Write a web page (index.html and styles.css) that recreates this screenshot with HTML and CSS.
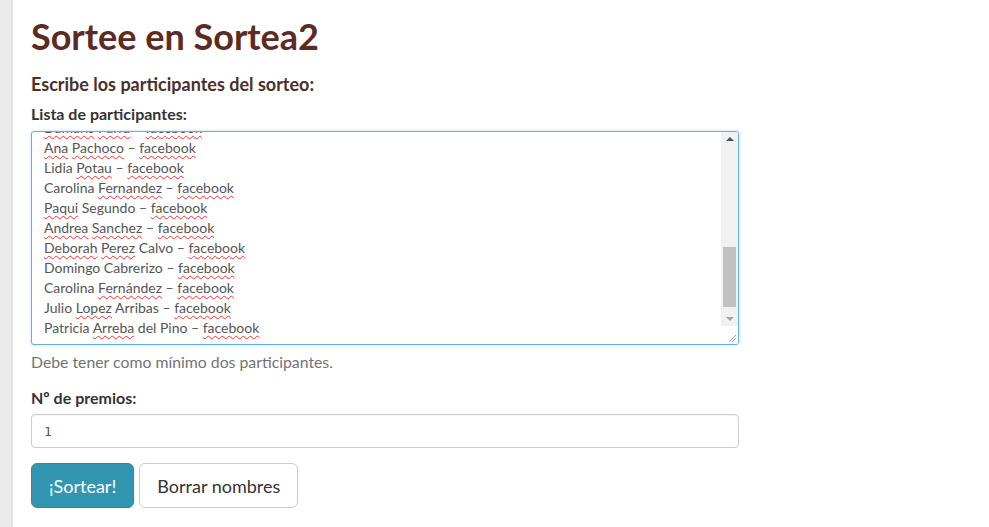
FILE: index.html
```html
<!DOCTYPE html>
<html lang="es">
<head>
<meta charset="utf-8">
<title>Sortee en Sortea2</title>
<link rel="stylesheet" href="styles.css">
</head>
<body>
<main class="page">
  <h1 class="title">Sortee en Sortea2</h1>
  <h2 class="subtitle">Escribe los participantes del sorteo:</h2>

  <label class="label">Lista de participantes:</label>
  <div class="textarea">
    <div class="ta-view">
      <div class="ta-lines">
        <div><span class="sp">Damaris</span> <span class="sp">Parra</span> – <span class="sp">facebook</span></div>
        <div><span class="sp">Ana</span> <span class="sp">Pachoco</span> – <span class="sp">facebook</span></div>
        <div>Lidia <span class="sp">Potau</span> – <span class="sp">facebook</span></div>
        <div>Carolina <span class="sp">Fernandez</span> – <span class="sp">facebook</span></div>
        <div><span class="sp">Paqui</span> Segundo – <span class="sp">facebook</span></div>
        <div><span class="sp">Andrea</span> <span class="sp">Sanchez</span> – <span class="sp">facebook</span></div>
        <div><span class="sp">Deborah</span> <span class="sp">Perez</span> Calvo – <span class="sp">facebook</span></div>
        <div>Domingo Cabrerizo – <span class="sp">facebook</span></div>
        <div>Carolina <span class="sp">Fernández</span> – <span class="sp">facebook</span></div>
        <div>Julio <span class="sp">Lopez</span> Arribas – <span class="sp">facebook</span></div>
        <div>Patricia <span class="sp">Arreba</span> del Pino – <span class="sp">facebook</span></div>
      </div>
    </div>
    <div class="scrollbar">
      <div class="sb-arrow sb-up"></div>
      <div class="sb-track"><div class="sb-thumb"></div></div>
      <div class="sb-arrow sb-down"></div>
      <div class="sb-corner">
        <svg width="17" height="18" viewBox="0 0 17 18"><path d="M8 16 L15 9 M11 16 L15 12" stroke="#9a9a9a" stroke-width="1" fill="none"/></svg>
      </div>
    </div>
  </div>
  <p class="help">Debe tener como mínimo dos participantes.</p>

  <label class="label label-prizes">Nº de premios:</label>
  <div class="input">1</div>

  <div class="actions">
    <button class="btn btn-primary">¡Sortear!</button>
    <button class="btn btn-default">Borrar nombres</button>
  </div>
</main>
</body>
</html>
```

FILE: styles.css
```css
* { box-sizing: border-box; }
html, body { margin: 0; padding: 0; height: 100%; }
body {
  background: #ebebeb;
  font-family: Lato, "Liberation Sans", sans-serif;
  overflow: hidden;
}
.page {
  margin-left: 11px;
  border-left: 2px solid #e2e2e2;
  background: #fff;
  min-height: 100%;
  padding: 13px 0 0 18px;
}
.title {
  margin: 0;
  font-size: 36px;
  font-weight: 700;
  line-height: 46px;
  color: #5c2b24;
}
.subtitle {
  margin: 13px 0 0;
  font-size: 18px;
  font-weight: 700;
  line-height: 24px;
  color: #4a2f2b;
}
.label {
  display: block;
  margin: 7px 0 6px;
  font-size: 16px;
  font-weight: 700;
  line-height: 22px;
  color: #333;
}
.textarea {
  width: 708px;
  height: 214px;
  border: 1px solid #66afe9;
  border-radius: 3px;
  box-shadow: 0 0 3px rgba(102, 175, 233, 0.5);
  display: flex;
  overflow: hidden;
  background: #fff;
}
.ta-view {
  flex: 1;
  overflow: hidden;
  padding-left: 12px;
}
.ta-lines {
  margin-top: -14px;
  font-size: 14px;
  line-height: 20px;
  color: #555;
}
.sp {
  text-decoration: underline wavy #e33;
  text-decoration-thickness: 1px;
  text-underline-offset: 2px;
}
.scrollbar {
  width: 17px;
  display: flex;
  flex-direction: column;
  background: #f1f1f1;
}
.sb-arrow {
  height: 17px;
  display: flex;
  align-items: center;
  justify-content: center;
}
.sb-up::before {
  content: "";
  border-left: 4px solid transparent;
  border-right: 4px solid transparent;
  border-bottom: 4px solid #505050;
}
.sb-down::before {
  content: "";
  border-left: 4px solid transparent;
  border-right: 4px solid transparent;
  border-top: 4px solid #a3a3a3;
}
.sb-track {
  flex: 1;
  padding: 101px 2px 6px 2px;
}
.sb-thumb {
  height: 60px;
  background: #c1c1c1;
}
.sb-corner {
  height: 18px;
  background: #fff;
}
.sb-corner svg { display: block; }
.help {
  margin: 6px 0 0;
  font-size: 15.8px;
  line-height: 22px;
  color: #737373;
}
.label-prizes {
  margin-top: 14px;
  margin-bottom: 5px;
}
.input {
  width: 708px;
  height: 34px;
  border: 1px solid #ccc;
  border-radius: 4px;
  padding: 0 12px;
  display: flex;
  align-items: center;
  font-family: "DejaVu Sans Mono", "Liberation Mono", monospace;
  font-size: 13px;
  color: #555;
  box-shadow: inset 0 1px 1px rgba(0,0,0,0.04);
}
.actions {
  display: flex;
  gap: 5px;
  margin-top: 15px;
}
.btn {
  height: 45px;
  padding: 0 17px;
  font-family: Lato, "Liberation Sans", sans-serif;
  font-size: 18px;
  border-radius: 6px;
  border: 1px solid transparent;
  cursor: pointer;
}
.btn-primary {
  background: #3396b1;
  border-color: #2e8aa3;
  color: #fff;
}
.btn-default {
  background: #fff;
  border-color: #ccc;
  color: #333;
}
```
